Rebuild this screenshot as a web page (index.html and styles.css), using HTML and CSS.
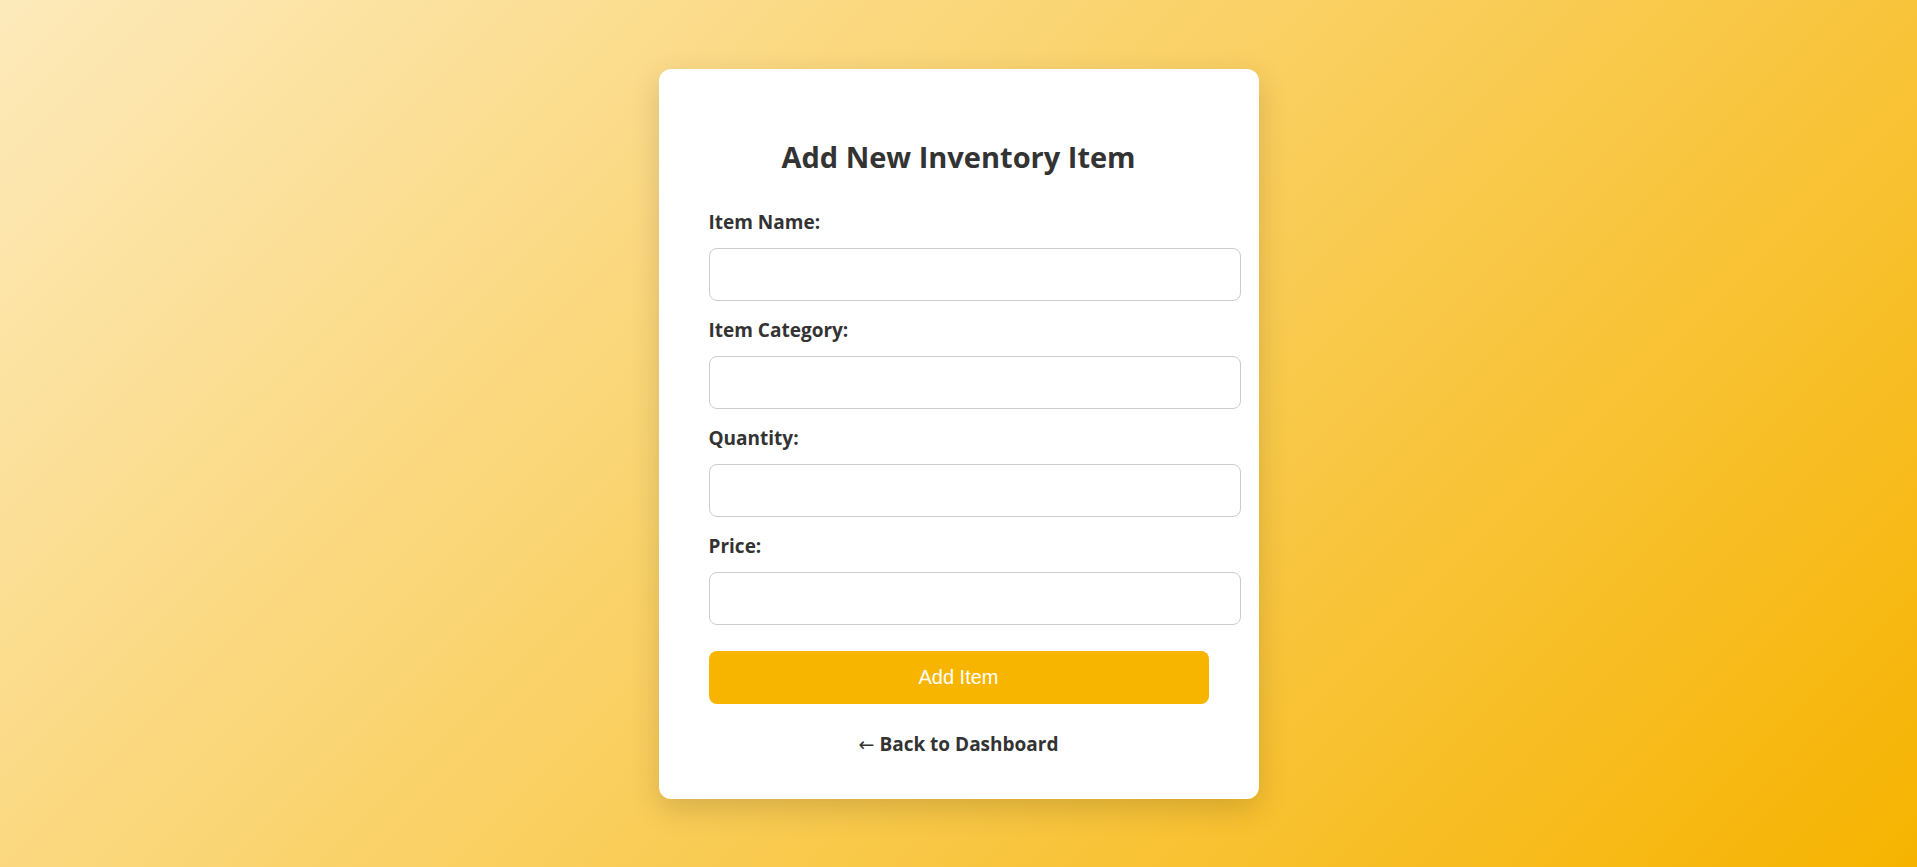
FILE: index.html
```html
<!DOCTYPE html>
<html lang="en">
<head>
<meta charset="utf-8">
<title>Add New Inventory Item</title>
<link rel="stylesheet" href="styles.css">
</head>
<body>
<div class="card">
  <h2 class="title">Add New Inventory Item</h2>
  <form class="form">
    <div class="group">
      <label class="label" for="name">Item Name:</label>
      <input class="input" id="name" type="text">
    </div>
    <div class="group">
      <label class="label" for="category">Item Category:</label>
      <input class="input" id="category" type="text">
    </div>
    <div class="group">
      <label class="label" for="quantity">Quantity:</label>
      <input class="input" id="quantity" type="text">
    </div>
    <div class="group">
      <label class="label" for="price">Price:</label>
      <input class="input" id="price" type="text">
    </div>
    <button class="btn" type="button">Add Item</button>
  </form>
  <div class="back"><a class="back-link" href="#"><span class="arrow">←</span> Back to Dashboard</a></div>
</div>
</body>
</html>
```
FILE: styles.css
```css
html, body {
  margin: 0;
  height: 100%;
}
body {
  font-family: "Open Sans", "Noto Sans", sans-serif;
  color: #333;
  background: linear-gradient(135deg, #fdeabb 0%, #f6b300 100%);
  display: flex;
  align-items: center;
  justify-content: center;
}
.card {
  width: 500px;
  background: #fff;
  border-radius: 12px;
  padding: 49px 50px 42px;
  box-shadow: 0 10px 30px rgba(0, 0, 0, 0.15);
}
.title {
  margin: 19px 0 32px;
  font-size: 29px;
  line-height: 40px;
  font-weight: 700;
  text-align: center;
  color: #333;
}
.form {
  margin: 0;
}
.group {
  margin-bottom: 16px;
}
.label {
  display: block;
  font-size: 19px;
  line-height: 26px;
  font-weight: 700;
  margin-bottom: 13px;
}
.input {
  display: block;
  box-sizing: content-box;
  width: 100%;
  height: 21px;
  padding: 15px;
  margin: 0;
  font-size: 16px;
  border: 1px solid #ccc;
  border-radius: 8px;
  font-family: "Open Sans", sans-serif;
  background: #fff;
}
.btn {
  display: block;
  box-sizing: border-box;
  width: 100%;
  height: 53px;
  margin: 26px 0 0;
  padding: 0 15px;
  font-family: "Liberation Sans", Arial, sans-serif;
  font-size: 20px;
  color: #fff;
  background: #f7b500;
  border: none;
  border-radius: 8px;
  cursor: pointer;
}
.back {
  margin-top: 27px;
  text-align: center;
  font-size: 19px;
  line-height: 26px;
}
.back-link {
  color: #333;
  font-weight: 700;
  text-decoration: none;
}
.arrow {
  font-weight: 400;
  font-size: 19px;
  font-family: "DejaVu Sans", sans-serif;
}
```
